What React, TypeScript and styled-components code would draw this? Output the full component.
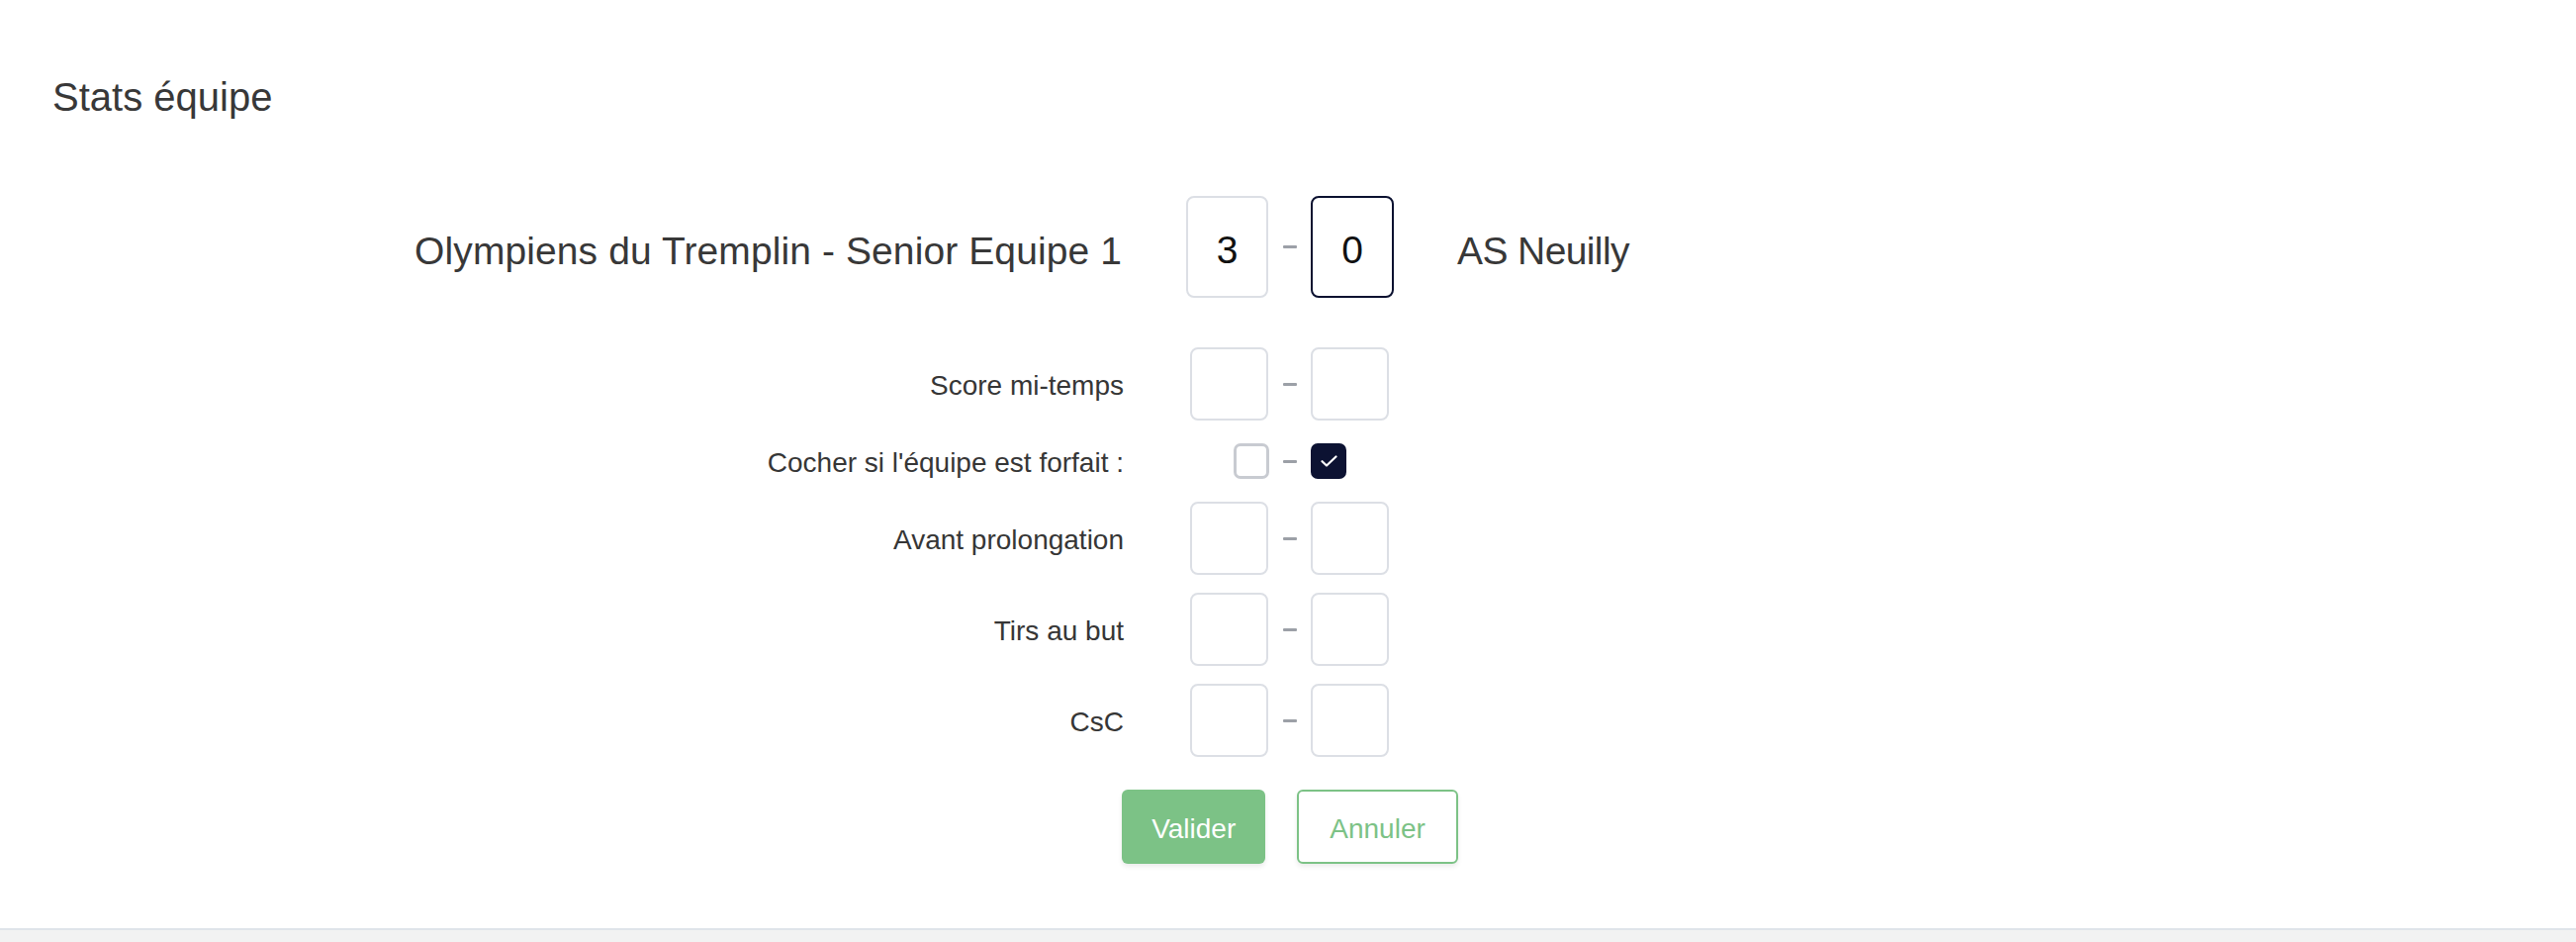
import React from "react";
import styled, { createGlobalStyle } from "styled-components";

const GlobalStyle = createGlobalStyle`
  html, body {
    margin: 0;
    padding: 0;
    background: #f2f2f2;
    font-family: "Liberation Sans", Arial, sans-serif;
  }
  * { box-sizing: border-box; }
`;

const Card = styled.section`
  background: #ffffff;
  height: 940px;
  border-bottom: 2px solid #dfe4ea;
  padding: 75px 53px 0;
`;

const Title = styled.h1`
  margin: 0 0 76px;
  font-size: 40px;
  line-height: 47px;
  font-weight: 400;
  color: #383838;
`;

const Form = styled.div`
  display: flex;
  flex-direction: column;
  gap: 18px;
  margin-left: 4px;
`;

const Row = styled.div<{ $h: number; $extra?: number }>`
  display: grid;
  grid-template-columns: 1fr 83px 43px 84px 1fr;
  align-items: center;
  height: ${(p) => p.$h}px;
  margin-bottom: ${(p) => p.$extra ?? 0}px;
`;

const Label = styled.div`
  text-align: right;
  padding-right: 63px;
  padding-top: 4px;
  font-size: 28px;
  color: #363636;
  white-space: nowrap;
`;

const Team = styled.div<{ $side: "left" | "right" }>`
  font-size: 39px;
  color: #383838;
  white-space: nowrap;
  padding-top: 8px;
  text-align: ${(p) => p.$side};
  padding-${(p) => p.$side}: ${(p) => (p.$side === "left" ? 64 : 65)}px;
  letter-spacing: ${(p) => (p.$side === "left" ? "-0.6px" : "0.1px")};
`;

const ScoreInput = styled.input<{ $focused?: boolean }>`
  width: 100%;
  height: 103px;
  border: 2px solid ${(p) => (p.$focused ? "#0b1130" : "#dcdfe5")};
  border-radius: 8px;
  background: #fff;
  font-family: "Liberation Sans", Arial, sans-serif;
  font-size: 39px;
  color: #111111;
  text-align: center;
  padding: 6px 0 0;
  outline: none;
`;

const SmallInput = styled.input<{ $side: "left" | "right" }>`
  width: 79px;
  height: 74px;
  justify-self: ${(p) => (p.$side === "left" ? "end" : "start")};
  border: 2px solid #dcdfe5;
  border-radius: 8px;
  background: #fff;
  font-size: 28px;
  text-align: center;
  padding: 0;
  outline: none;
`;

const Dash = styled.span`
  justify-self: center;
  width: 14px;
  height: 3px;
  background: #9ca0a7;
  border-radius: 1px;
`;

const Check = styled.span<{ $checked?: boolean; $side: "left" | "right" }>`
  justify-self: ${(p) => (p.$side === "left" ? "end" : "start")};
  width: 36px;
  height: 36px;
  border-radius: 7px;
  border: ${(p) => (p.$checked ? "none" : "3px solid #c8cbd1")};
  background: ${(p) => (p.$checked ? "#0c1232" : "#ffffff")};
  display: flex;
  align-items: center;
  justify-content: center;
  margin-right: ${(p) => (p.$side === "left" ? "-1px" : "0")};
`;

const Actions = styled.div`
  display: flex;
  justify-content: center;
  gap: 32px;
  margin-top: 15px;
`;

const Button = styled.button<{ $outline?: boolean }>`
  height: 75px;
  padding: 4px ${(p) => (p.$outline ? 31 : 30)}px 0;
  border-radius: 6px;
  font-family: "Liberation Sans", Arial, sans-serif;
  font-size: 28px;
  cursor: pointer;
  border: ${(p) => (p.$outline ? "2px solid #7cc286" : "none")};
  background: ${(p) => (p.$outline ? "#ffffff" : "#7cc286")};
  color: ${(p) => (p.$outline ? "#7cc286" : "#ffffff")};
  box-shadow: 0 3px 5px rgba(0, 0, 0, 0.08);
`;

const CheckIcon = () => (
  <svg width="17" height="12" viewBox="0 0 17 12" fill="none">
    <path d="M1.5 6.2 L6 10.5 L15.5 1.5" stroke="#ffffff" strokeWidth="2.2" strokeLinecap="round" strokeLinejoin="round" />
  </svg>
);

const rows = ["Avant prolongation", "Tirs au but", "CsC"];

export default function App() {
  return (
    <>
      <GlobalStyle />
      <Card>
        <Title>Stats équipe</Title>
        <Form>
          <Row $h={103} $extra={32}>
            <Team $side="right">Olympiens du Tremplin - Senior Equipe 1</Team>
            <ScoreInput defaultValue="3" />
            <Dash />
            <ScoreInput defaultValue="0" $focused />
            <Team $side="left">AS Neuilly</Team>
          </Row>
          <Row $h={74}>
            <Label>Score mi-temps</Label>
            <SmallInput $side="left" />
            <Dash />
            <SmallInput $side="right" />
            <div />
          </Row>
          <Row $h={46}>
            <Label>Cocher si l'équipe est forfait :</Label>
            <Check $side="left" />
            <Dash />
            <Check $side="right" $checked>
              <CheckIcon />
            </Check>
            <div />
          </Row>
          {rows.map((r) => (
            <Row $h={74} key={r}>
              <Label>{r}</Label>
              <SmallInput $side="left" />
              <Dash />
              <SmallInput $side="right" />
              <div />
            </Row>
          ))}
          <Actions>
            <Button>Valider</Button>
            <Button $outline>Annuler</Button>
          </Actions>
        </Form>
      </Card>
    </>
  );
}
